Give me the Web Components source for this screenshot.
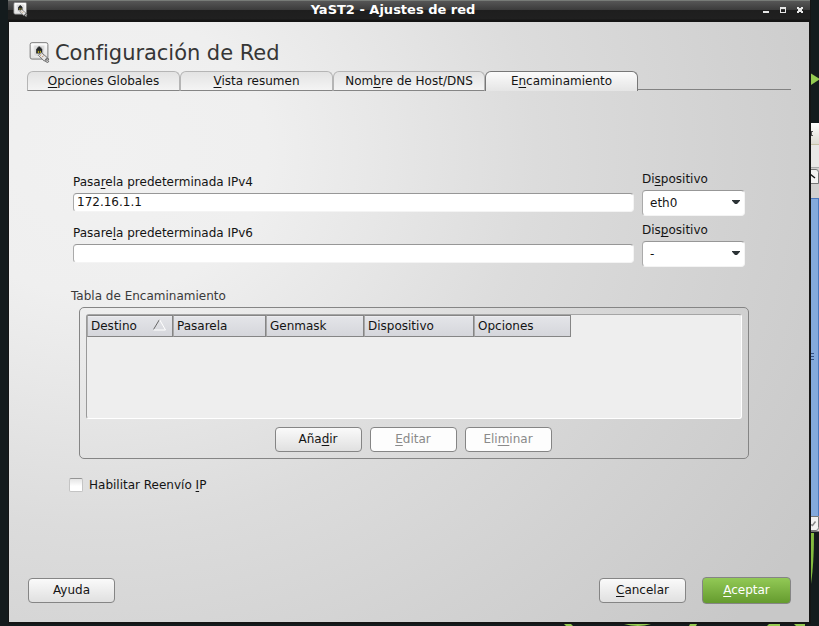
<!DOCTYPE html>
<html lang="es"><head><meta charset="utf-8"><title>YaST2 - Ajustes de red</title>
<style>
html,body{margin:0;width:819px;height:626px;overflow:hidden;background:#131a1c;font:12px/14px "DejaVu Sans",sans-serif;color:#141414}
</style></head><body>
<yast-desktop>
 <yast-window caption="YaST2 - Ajustes de red">
  <yast-heading>Configuración de Red</yast-heading>
  <yast-tabs>
   <yast-tab label="_Opciones Globales"></yast-tab><yast-tab label="_Vista resumen"></yast-tab><yast-tab class="narrow" label="Nom_bre de Host/DNS"></yast-tab><yast-tab label="E_ncaminamiento" active></yast-tab>
  </yast-tabs>
  <yast-gateway label="Pasa_rela predeterminada IPv4" value="172.16.1.1" devlabel="Di_spositivo" device="eth0"></yast-gateway>
  <yast-gateway label="Pasare_la predeterminada IPv6" value="" devlabel="Dis_positivo" device="-"></yast-gateway>
  <yast-group label="Tabla de Encaminamiento">
   <yast-table></yast-table>
   <yast-button slot="actions" label="Aña_dir"></yast-button>
   <yast-button slot="actions" label="_Editar" disabled></yast-button>
   <yast-button slot="actions" label="Eli_minar" disabled></yast-button>
  </yast-group>
  <yast-check label="Habilitar Reenvío _IP"></yast-check>
  <yast-button slot="left" label="Ayuda"></yast-button>
  <yast-button slot="right" label="_Cancelar"></yast-button>
  <yast-button slot="right" label="_Aceptar" primary></yast-button>
 </yast-window>
</yast-desktop>
<script>
const accel = s => (s||'').replace(/_(.)/, '<u>$1</u>');
const base = `*{box-sizing:border-box}u{text-decoration:underline 1px;text-underline-offset:2px;text-decoration-skip-ink:none}svg{display:block}`;
const define = (name, css, html) => customElements.define(name, class extends HTMLElement{
  connectedCallback(){
    if(this.shadowRoot) return;
    this.attachShadow({mode:'open'}).innerHTML = `<style>${base}${css}</style>${html(n=>this.getAttribute(n))}`;
  }
});
const netIcon = size => `<svg width="${size}" height="${size}" viewBox="0 0 21 22"><defs><linearGradient id="p" x2="0" y2="1"><stop stop-color="#fff"/><stop offset="1" stop-color="#dedede"/></linearGradient></defs>
<rect x=".7" y=".7" width="18.6" height="17.2" rx="2" fill="url(#p)" stroke="#777"/><rect x="4.5" y="3.5" width="11.5" height="11.5" rx="1.5" fill="#dcdcdc" stroke="#eee"/>
<path d="M7 12V7.2H8V5.8H9.200V4.800h2V5.800h1.300v1.400h.9V12z" fill="#252729"/><path d="M9.300 9.300v2.200M11.400 9.300v2.200" stroke="#d7c520" stroke-width="1"/>
<path d="M9.300 14l3-3 6.200 5.200-3 3.800z" fill="#e6e6e6" stroke="#666" stroke-width=".9"/><path d="M11 14.400l1.400-1.400M13.200 16l1.600-1.800" stroke="#b7824e" stroke-width=".9"/><path d="M16.500 20.200l2.700-3.100 1.300 1-1.300 1 1 1.500-1.300.9z" fill="#ccc" stroke="#444" stroke-width=".8"/></svg>`;

define('yast-desktop', `:host{display:block;position:relative;width:819px;height:626px;background:#141b1d}
 .bg{position:absolute;inset:0}`, () => `<svg class="bg" width="819" height="626">
 <defs><linearGradient id="w" x2="0" y2="1"><stop stop-color="#fff"/><stop offset="1" stop-color="#dedbd2"/></linearGradient></defs>
 <path d="M811 73.500L820 79l-9 6z" fill="#95cb52"/>
 <path d="M811 123h8v21h-8z" fill="url(#w)"/><path d="M811 131h2v1h-1v3h1v1h-2z" fill="#555"/>
 <path d="M811 144h8v1h-8z" fill="#c6c1a6"/><path d="M811 145h8v22h-8z" fill="#e9e7e6"/><path d="M811 167h8v1h-8z" fill="#aaa"/><path d="M811 168h8v30h-8z" fill="#d2d0cf"/>
 <path d="M808 169.500h8q2.500 0 2.500 3v11h-10z" fill="#f3f2f1" stroke="#777"/><path d="M810 174l5 4" stroke="#111" stroke-width="1.500"/>
 <path d="M811 198h8v318h-8z" fill="#84a9dc"/><path d="M818 198h1v318h-1zM811 198h8v1h-8z" fill="#4a78bd"/><path d="M811 353.500h3m-3 3h3m-3 3h3" stroke="#304f83"/>
 <path d="M811 516h8v16h-8z" fill="#e7e5e2"/><path d="M808 516.500h10.500v11q0 3-2.500 3h-8" fill="#f3f2f1" stroke="#777"/><path d="M811 524.500l1.500 1 3-4" fill="none" stroke="#888" stroke-width="1.500"/><path d="M811 531.500h8" stroke="#777"/>
 <path d="M811 533h3q0 31-3 51z" fill="#84bd40"/>
 <path d="M564 624h7l2 2h-7zM624 624h27q-6 2-13 2t-14-2zM690 624h7l-1 2h-7zM769 624h11v2h-13zM794 624h11v2h-9z" fill="#95cb52"/></svg><slot></slot>`);

define('yast-window', `:host{box-sizing:border-box;position:absolute;left:8px;top:0;width:803px;height:624px;background:#151515;display:flex;flex-direction:column;padding:0 2px 2px 1px}
 header{height:22px;flex:none;margin:0 -1px;display:grid;grid-template-columns:48px 1fr 48px;background:linear-gradient(#777b77 0 1px,#565656 1px,#3b3b3b 10px,#1e1e1e 10px,#202020 19px,#141414 20px)}
 header b{color:#fff;font-size:13px;line-height:19px;text-align:center;margin-left:-32px}
 .ic{padding:2px 0 0 5px}
 .body{flex:1;display:flex;flex-direction:column;min-height:0;background:radial-gradient(ellipse 840px 720px at 90px 130px,#f1f1f1 0,#efefef 20%,#e7e7e7 34%,#dcdcdc 52%,#d2d2d2 75%,#c8c8c8 100%)}
 .main{flex:1;display:flex;flex-direction:column;align-items:flex-start;padding-top:19px}
 footer{display:flex;justify-content:space-between;align-items:center;height:27px;margin:0 18px 18px 19px}
 .r{display:flex;gap:16px;align-items:center}`, a => `<header><span class="ic">${netIcon(15)}</span><b>${a('caption')}</b>
 <svg width="48" height="20" viewBox="754 0 48 20" shape-rendering="crispEdges"><path d="M755 11h6v2h-6z" fill="#e6e6e6"/><path d="M772 7h6v6h-6z M773 9v3h4V9z" fill-rule="evenodd" fill="#e6e6e6"/><path d="M789 7h2v1h2V7h2v2h-1v2h1v2h-2v-1h-2v1h-2v-2h1V9h-1z" fill="#e6e6e6"/></svg></header>
 <div class="body"><div class="main"><slot></slot></div><footer><slot name="left"></slot><div class="r"><slot name="right"></slot></div></footer></div>`);

define('yast-heading', `:host{display:flex;box-sizing:border-box;gap:5px;margin-left:20px;height:30px;padding-top:1px;font-size:21px;line-height:22px;letter-spacing:-.04px;color:#363636}span{white-space:nowrap}`, () => netIcon(21) + `<span><slot></slot></span>`);

define('yast-tabs', `:host{display:flex;width:764px;margin-left:18px;height:20px}i{flex:1;border-bottom:1px solid #828282;height:19px}`, () => `<slot></slot><i></i>`);
define('yast-tab', `:host{display:block;box-sizing:border-box;width:153px;height:20px;border:1px solid #b5b5b5;border-bottom-color:#858585;border-radius:6px 6px 0 0;background:linear-gradient(#e3e3e3,#f4f4f4);text-align:center;line-height:18px;white-space:nowrap;color:#141414}
 :host(.narrow){width:152px}
 :host([active]){border-color:#777;border-bottom:0;background:linear-gradient(#fbfbfb,#e5e5e5)}`, a => accel(a('label')));

define('yast-gateway', `:host{display:flex;gap:8px;margin-left:64px;height:51px}
 :host(:nth-of-type(1)){margin-top:81px}
 div{display:flex;flex-direction:column}
 .g{width:561px;padding-top:3px;gap:4px}.d{width:103px;gap:4px}
 .in{height:19px;background:#fff;border:1px solid #f4f4f4;border-top-color:#979797;border-left-color:#aaa;border-radius:4px;padding-left:3px;line-height:17px}
 .c{height:26px;background:#fff;border:1px solid #f4f4f4;border-top-color:#979797;border-left-color:#aaa;border-radius:4px;flex-direction:row;justify-content:space-between;align-items:center;padding:0 4px 0 7px}
 svg{margin-top:-2px}`,
 a => `<div class="g"><span>${accel(a('label'))}</span><div class="in">${a('value')}</div></div><div class="d"><span>${accel(a('devlabel'))}</span><div class="c"><span>${a('device')}</span><svg width="8" height="4"><path d="M0 0h8v.7L5 4H3L0 .7z" fill="#2c3336"/></svg></div></div>`);

define('yast-group', `:host{display:block;margin:15px 0 0 62px;color:#3a3a3a}
 .box{margin:4px 0 0 8px;width:670px;height:152px;border:1px solid #858585;border-radius:5px;padding:6px;display:flex;flex-direction:column}
 .a{display:flex;justify-content:center;gap:8px;margin:8px 2px 0 0}`, a => `<div>${a('label')}</div><div class="box"><slot></slot><div class="a"><slot name="actions"></slot></div></div>`);

define('yast-table', `:host{display:block;box-sizing:border-box;height:105px;width:656px;border:1px solid #fff;border-top-color:#a5a5a5;border-left-color:#999;border-radius:3px;background:#eee}
 .h{display:flex;height:22px;color:#141414}
 .h div{border:1px solid #858585;border-left-color:#a8a8a8;background:linear-gradient(#e4e5e9,#d5d6db);padding-left:3px;line-height:20px;display:flex;justify-content:space-between;align-items:center;box-shadow:inset 0 1px #ededf0}
 svg{margin:-2px 6px 0 0}`, () => `<div class="h">${[['Destino',86],['Pasarela',93],['Genmask',98],['Dispositivo',110],['Opciones',97]].map(([t,w],i)=>`<div style="width:${w}px">${t}${i?'':'<svg width="13" height="12"><path d="M.5 10.500L6.500 .5" stroke="#666" fill="none"/><path d="M6.500 .5l6 10.500H.5" stroke="#fff" fill="none"/></svg>'}</div>`).join('')}</div>`);

define('yast-button', `:host{display:block;box-sizing:border-box;width:87px;height:25px;border:1px solid #858585;border-radius:4px;background:linear-gradient(#fafafa,#e0e0e0);text-align:center;line-height:22px;color:#141414}
 :host([disabled]){background:#fdfdfd;color:#8a8a8a}
 :host([primary]){width:89px;height:27px;line-height:24px;background:linear-gradient(#92c956,#659b2e);color:#fff}`, a => accel(a('label')));

define('yast-check', `:host{display:flex;gap:6px;align-items:center;margin:19px 0 0 60px;height:14px}
 i{width:14px;height:14px;border:1px solid #c4c4c4;border-top-color:#949494;border-radius:2px;background:linear-gradient(#e5e5e5,#fff 60%)}`, a => `<i></i><span>${accel(a('label'))}</span>`);
</script>
</body></html>
